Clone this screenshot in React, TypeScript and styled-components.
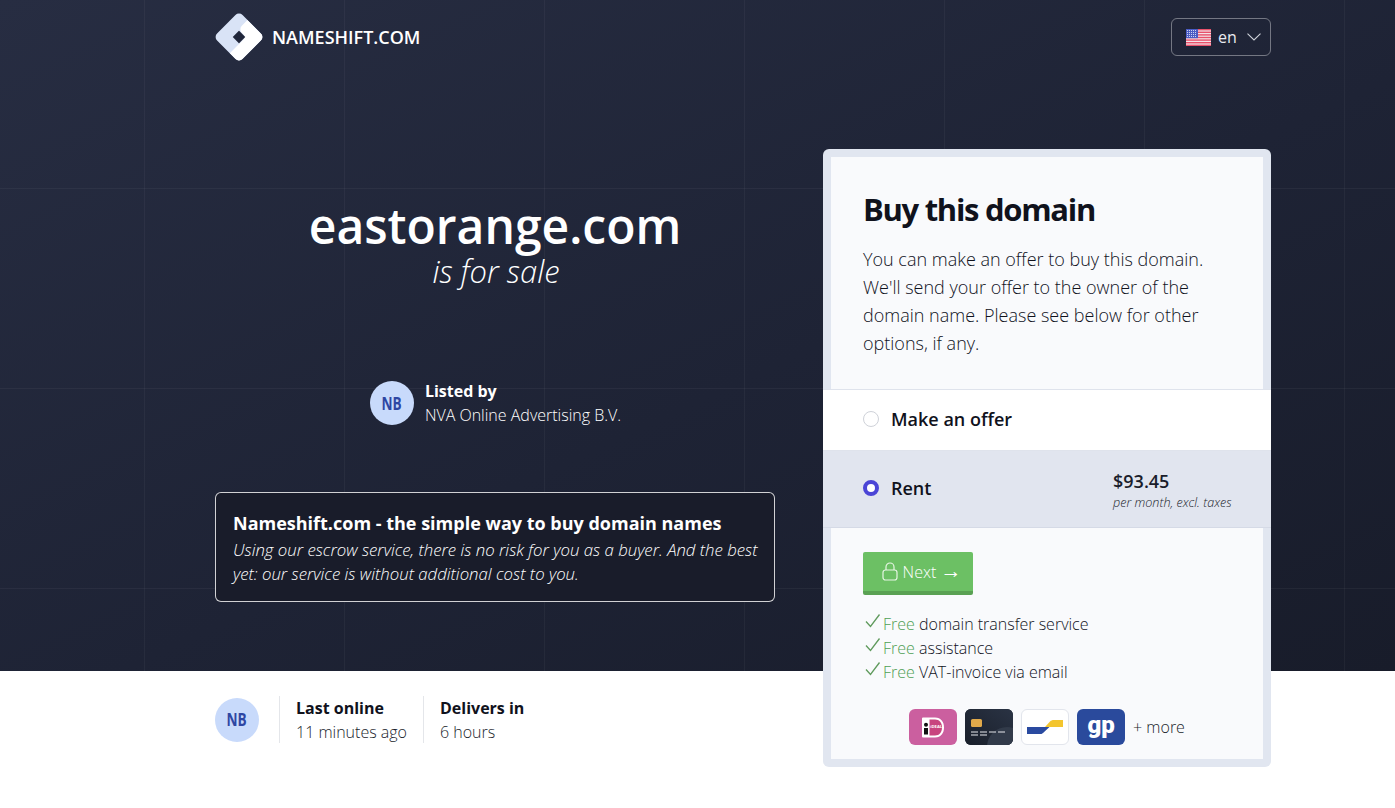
import React from "react";
import styled, { createGlobalStyle } from "styled-components";

const Global = createGlobalStyle`
  html, body { margin: 0; padding: 0; background: #fff; }
  body { font-family: "Open Sans", "Liberation Sans", sans-serif; color: #1a1d2b; -webkit-font-smoothing: antialiased; }
  * { box-sizing: border-box; }
`;

const Page = styled.div`
  height: 808px;
  overflow: hidden;
`;

const Hero = styled.section`
  height: 671px;
  background-color: #20253a;
  background-image:
    linear-gradient(rgba(255, 255, 255, 0.045) 1px, transparent 1px),
    linear-gradient(90deg, rgba(255, 255, 255, 0.04) 1px, transparent 1px),
    linear-gradient(155deg, #272d42 0%, #1e2335 55%, #181c2a 100%);
  background-size: 200px 200px, 200px 200px, 100% 100%;
  background-position: 0 188px, 144px 0, 0 0;
`;

const Container = styled.div`
  width: 1056px;
  margin-left: 215px;
`;

const Header = styled.header`
  height: 74px;
  display: flex;
  align-items: flex-start;
  justify-content: space-between;
`;

const Brand = styled.div`
  display: flex;
  align-items: center;
  gap: 8px;
  height: 74px;
  color: #fff;
  font-size: 18px;
  font-weight: 600;
`;

const LangButton = styled.div`
  margin-top: 18px;
  width: 100px;
  height: 38px;
  border: 1px solid rgba(255, 255, 255, 0.38);
  border-radius: 6px;
  display: flex;
  align-items: center;
  padding-left: 14px;
  gap: 7px;
  color: #e8eaf0;
  font-size: 16px;
  font-weight: 400;
`;

const Columns = styled.div`
  display: grid;
  grid-template-columns: 560px 448px;
  gap: 48px;
  margin-top: 75px;
`;

const Left = styled.div`
  display: flex;
  flex-direction: column;
  align-items: center;
  padding-top: 47px;
`;

const DomainName = styled.h1`
  margin: 0;
  font-size: 48px;
  line-height: 59px;
  font-weight: 600;
  color: #fff;
`;

const ForSale = styled.div`
  font-size: 31px;
  line-height: 32px;
  margin-left: 2px;
  font-weight: 300;
  font-style: italic;
  color: #fff;
`;

const ListedRow = styled.div`
  margin-top: 92px;
  margin-left: 1px;
  display: flex;
  align-items: center;
  gap: 11px;
`;

const Avatar = styled.div`
  width: 44px;
  height: 44px;
  flex: none;
  border-radius: 50%;
  background: #c8dafb;
  color: #2e46a3;
  display: flex;
  align-items: center;
  justify-content: center;
`;

const Initials = styled.span`
  display: inline-block;
  font-size: 17px;
  font-weight: 700;
  transform: scaleX(0.8);
`;

const Strong = styled.div<{ $light?: boolean }>`
  font-size: 16px;
  line-height: 24px;
  font-weight: 700;
  color: ${(p) => (p.$light ? "#fff" : "#10121c")};
`;

const Regular = styled.div<{ $light?: boolean }>`
  font-size: 16px;
  line-height: 24px;
  font-weight: 300;
  color: ${(p) => (p.$light ? "#fff" : "#1a1d2b")};
`;

const InfoBox = styled.div`
  margin-top: 65px;
  width: 560px;
  height: 110px;
  padding: 16px 12px 0 17px;
  background: #191c2a;
  border: 1px solid rgba(255, 255, 255, 0.8);
  border-radius: 6px;
  color: #fff;
`;

const InfoTitle = styled.div`
  font-size: 18px;
  line-height: 28px;
  margin-bottom: 1px;
  font-weight: 700;
`;

const InfoText = styled.div`
  font-size: 16.75px;
  line-height: 24px;
  font-weight: 300;
  font-style: italic;
`;

const Card = styled.aside`
  height: 618px;
  position: relative;
  z-index: 1;
  padding: 8px;
  background: #e1e6f0;
  border-radius: 6px;
  display: flex;
  flex-direction: column;
`;

const CardTop = styled.div`
  height: 232px;
  padding: 30px 32px 0;
  background: #f9fafc;
`;

const CardTitle = styled.h2`
  margin: 0 0 13px;
  font-size: 31px;
  line-height: 45px;
  font-weight: 700;
  letter-spacing: -1.3px;
  color: #10121c;
`;

const CardText = styled.p`
  margin: 0;
  font-size: 18px;
  line-height: 28px;
  font-weight: 300;
  color: #10121c;
`;

const Option = styled.div<{ $selected?: boolean }>`
  margin: 0 -8px;
  height: ${(p) => (p.$selected ? 78 : 61)}px;
  padding: 0 39px 2px 40px;
  display: flex;
  align-items: center;
  background: ${(p) => (p.$selected ? "#e1e5ef" : "#fff")};
  border-top: 1px solid #dfe3ec;
  border-bottom: ${(p) => (p.$selected ? "1px solid #d5dae6" : "none")};
`;

const Radio = styled.span<{ $selected?: boolean }>`
  width: 16px;
  height: 16px;
  flex: none;
  border-radius: 50%;
  margin-right: 12px;
  background: #fff;
  border: ${(p) => (p.$selected ? "4.5px solid #4b45d6" : "1px solid #cfd2d9")};
`;

const OptionLabel = styled.span`
  flex: 1;
  font-size: 18px;
  font-weight: 600;
  color: #10121c;
`;

const Price = styled.div`
  width: 119px;
  margin-top: 6px;
`;

const PriceValue = styled.div`
  font-size: 18px;
  line-height: 24px;
  font-weight: 600;
  color: #1a1d2b;
`;

const PriceNote = styled.div`
  font-size: 12.6px;
  line-height: 20px;
  font-weight: 300;
  font-style: italic;
  color: #1a1d2b;
  white-space: nowrap;
`;

const CardBottom = styled.div`
  flex: 1;
  padding: 24px 32px 0;
  background: #f9fafc;
`;

const NextButton = styled.div`
  width: 110px;
  height: 43px;
  padding-left: 7px;
  background: #6cc064;
  border-bottom: 4px solid #5aa153;
  border-radius: 2px;
  color: #fff;
  font-size: 16px;
  font-weight: 300;
  display: flex;
  align-items: center;
  justify-content: center;
  gap: 5px;
`;

const Arrow = styled.span`
  font-size: 21px;
  line-height: 16px;
`;

const Perks = styled.ul`
  list-style: none;
  margin: 17px 0 0;
  padding: 0;
`;

const Perk = styled.li`
  display: flex;
  align-items: center;
  height: 24px;
  font-size: 16px;
  font-weight: 300;
  color: #10121c;
  white-space: pre;
`;

const CheckMark = styled.svg`
  width: 16px;
  height: 16px;
  margin: -6px 2px 0 2px;
  flex: none;
`;

const Free = styled.span`
  color: #4f9f55;
`;

const Payments = styled.div`
  margin-top: 25px;
  display: flex;
  align-items: center;
  justify-content: center;
  gap: 8px;
  font-size: 16px;
  font-weight: 300;
`;

const PayBadge = styled.div<{ $bg: string; $border?: boolean }>`
  width: 48px;
  height: 36px;
  border-radius: 6px;
  overflow: hidden;
  display: flex;
  align-items: center;
  justify-content: center;
  background: ${(p) => p.$bg};
  border: ${(p) => (p.$border ? "1px solid #e2e5ec" : "none")};
`;

const GpText = styled.span`
  font-family: "Roboto", "Open Sans", sans-serif;
  font-size: 24px;
  line-height: 30px;
  margin-top: -4px;
  font-weight: 900;
  color: #fff;
`;

const FooterRow = styled.div`
  display: flex;
  align-items: center;
  padding-top: 25px;
`;

const Stat = styled.div<{ $first?: boolean }>`
  height: 47px;
  margin-left: ${(p) => (p.$first ? 20 : 16)}px;
  padding-left: 16px;
  border-left: 1px solid #e4e6ea;
`;

const LogoMark = styled.svg`
  margin-left: -1px;
  flex: none;
`;

const ChevronMark = styled.svg`
  margin-left: 3px;
  flex: none;
`;

const Logo = () => (
  <LogoMark width="50" height="50" viewBox="0 0 50 50" aria-hidden="true">
    <defs>
      <clipPath id="logoClip">
        <rect x="-18" y="-18" width="36" height="36" rx="5" />
      </clipPath>
    </defs>
    <g transform="translate(25 25) rotate(45)">
      <rect x="-18" y="-18" width="36" height="36" rx="5" fill="#d9e3f6" />
      <path clipPath="url(#logoClip)" d="M-6 -18H18V18H5V-1a4 4 0 0 0-4-4H-1A5 5 0 0 1-6-10Z" fill="#fff" />
      <rect x="-4.5" y="-4.5" width="9" height="9" rx="0.5" fill="#20263a" />
    </g>
  </LogoMark>
);

const Flag = () => (
  <svg width="25" height="17" viewBox="0 0 25 17" aria-hidden="true">
    <rect width="25" height="17" fill="#f3e4e8" />
    {[0, 2.6, 5.2, 7.8, 10.4, 13, 15.6].map((y) => (
      <rect key={y} y={y} width="25" height="1.4" fill="#e8516b" />
    ))}
    <rect width="12" height="9.2" fill="#4a5cc4" />
    {[1.5, 3.5, 5.5, 7.5].map((y) =>
      [1.5, 3.5, 5.5, 7.5, 9.5].map((x) => <circle key={`${x}-${y}`} cx={x} cy={y} r="0.55" fill="#e4e8fa" />)
    )}
  </svg>
);

const Chevron = () => (
  <ChevronMark width="14" height="8" viewBox="0 0 14 8" fill="none" stroke="#cfd2da" strokeWidth="1.1" aria-hidden="true">
    <path d="M0.5 0.7 7 7 13.5 0.7" />
  </ChevronMark>
);

const Lock = () => (
  <svg width="16" height="19" viewBox="0 0 16 19" fill="none" stroke="#e6f5e3" strokeWidth="1.2" aria-hidden="true">
    <rect x="1" y="8" width="14" height="10" rx="2.5" />
    <path d="M4 8V5a4 4 0 0 1 8 0v3" />
  </svg>
);

const Check = () => (
  <CheckMark viewBox="0 0 16 16" fill="none" stroke="#5f9a5c" strokeWidth="1.3">
    <path d="M1 8.5 5.5 13.5 14.500 1.500" />
  </CheckMark>
);

const Ideal = () => (
  <svg width="24" height="21" viewBox="0 0 24 21" aria-hidden="true">
    <path d="M1 1.500a1 1 0 0 1 1-1h12c6 0 9 4.500 9 10s-3 10-9 10H2a1 1 0 0 1-1-1Z" fill="#fff" />
    <path d="M8.500 2.500H14c4.500 0 7 3.500 7 8s-2.500 8-7 8H8.500Z" fill="#c8447f" />
    <rect x="3" y="11" width="4" height="6.500" fill="#111" />
    <circle cx="5" cy="7.800" r="2" fill="#111" />
    <text x="9.200" y="10.500" fontFamily="Open Sans, sans-serif" fontSize="4.200" fontWeight="700" fill="#fff">iDEAL</text>
  </svg>
);

const CreditCard = () => (
  <svg width="48" height="36" viewBox="0 0 48 36" aria-hidden="true">
    <defs>
      <linearGradient id="cardFill" x1="0" y1="1" x2="1" y2="0">
        <stop offset="0" stopColor="#191f2a" />
        <stop offset="1" stopColor="#2a3344" />
      </linearGradient>
    </defs>
    <rect width="48" height="36" fill="url(#cardFill)" />
    <circle cx="42" cy="38" r="20" fill="#323b4a" />
    <rect x="6" y="10" width="11" height="8" rx="1.500" fill="#e0a94a" />
    <path d="M6 23h7M15 23h7M24 23h7M33 23h7M6 26h7M15 26h7" stroke="#e6e8ec" strokeWidth="1.200" />
  </svg>
);

const Bancontact = () => (
  <svg width="46" height="34" viewBox="1 1 46 34" aria-hidden="true">
    <path d="M6 18H25C27 18 28 18 29 17.500L22 24C21 25 20 25 19 25H6Z" fill="#2a4aa0" />
    <path d="M42 11H33C31 11 30 11.500 29 12.500L24 18H42Z" fill="#f3c52e" />
  </svg>
);

export default function App() {
  return (
    <Page>
      <Global />
      <Hero>
        <Container>
          <Header>
            <Brand>
              <Logo />
              NAMESHIFT.COM
            </Brand>
            <LangButton>
              <Flag />
              en
              <Chevron />
            </LangButton>
          </Header>
          <Columns>
            <Left>
              <DomainName>eastorange.com</DomainName>
              <ForSale>is for sale</ForSale>
              <ListedRow>
                <Avatar><Initials>NB</Initials></Avatar>
                <div>
                  <Strong $light>Listed by</Strong>
                  <Regular $light>NVA Online Advertising B.V.</Regular>
                </div>
              </ListedRow>
              <InfoBox>
                <InfoTitle>Nameshift.com - the simple way to buy domain names</InfoTitle>
                <InfoText>
                  Using our escrow service, there is no risk for you as a buyer. And the best yet: our service is
                  without additional cost to you.
                </InfoText>
              </InfoBox>
            </Left>
            <Card>
              <CardTop>
                <CardTitle>Buy this domain</CardTitle>
                <CardText>
                  You can make an offer to buy this domain. We'll send your offer to the owner of the domain name.
                  Please see below for other options, if any.
                </CardText>
              </CardTop>
              <Option>
                <Radio />
                <OptionLabel>Make an offer</OptionLabel>
              </Option>
              <Option $selected>
                <Radio $selected />
                <OptionLabel>Rent</OptionLabel>
                <Price>
                  <PriceValue>$93.45</PriceValue>
                  <PriceNote>per month, excl. taxes</PriceNote>
                </Price>
              </Option>
              <CardBottom>
                <NextButton>
                  <Lock />
                  <span>Next <Arrow>→</Arrow></span>
                </NextButton>
                <Perks>
                  <Perk><Check /><Free>Free</Free> domain transfer service</Perk>
                  <Perk><Check /><Free>Free</Free> assistance</Perk>
                  <Perk><Check /><Free>Free</Free> VAT-invoice via email</Perk>
                </Perks>
                <Payments>
                  <PayBadge $bg="#cb5f9f"><Ideal /></PayBadge>
                  <PayBadge $bg="#1f2633"><CreditCard /></PayBadge>
                  <PayBadge $bg="#fff" $border><Bancontact /></PayBadge>
                  <PayBadge $bg="#2a4a9c"><GpText>gp</GpText></PayBadge>
                  + more
                </Payments>
              </CardBottom>
            </Card>
          </Columns>
        </Container>
      </Hero>
      <Container>
        <FooterRow>
          <Avatar><Initials>NB</Initials></Avatar>
          <Stat $first>
            <Strong>Last online</Strong>
            <Regular>11 minutes ago</Regular>
          </Stat>
          <Stat>
            <Strong>Delivers in</Strong>
            <Regular>6 hours</Regular>
          </Stat>
        </FooterRow>
      </Container>
    </Page>
  );
}
